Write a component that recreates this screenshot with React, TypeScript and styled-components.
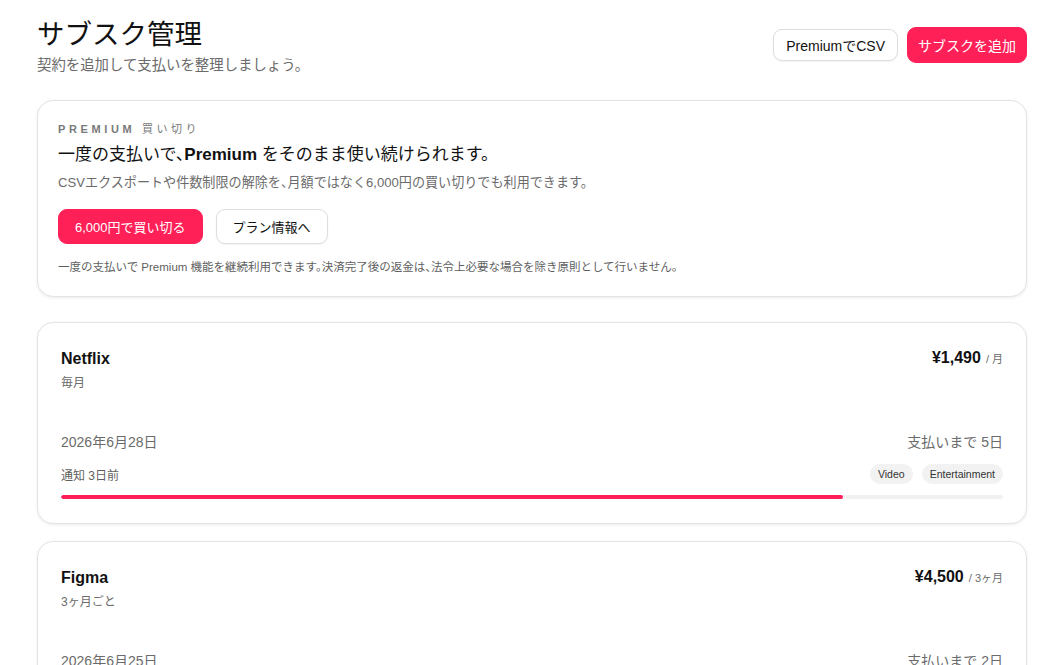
import React from "react";
import styled, { createGlobalStyle } from "styled-components";

const Global = createGlobalStyle`
  html, body { margin: 0; padding: 0; background: #ffffff; overflow: hidden; }
  body {
    font-family: "Liberation Sans", "Noto Sans CJK JP", sans-serif;
    color: #111111;
    -webkit-font-smoothing: antialiased;
    font-feature-settings: "halt";
  }
  * { box-sizing: border-box; }
`;

const RED = "#ff2058";

const Page = styled.main`
  max-width: 990px;
  margin: 0 auto;
  padding: 15px 0 40px;
  display: flex;
  flex-direction: column;
`;

const Header = styled.header`
  display: flex;
  justify-content: space-between;
  align-items: center;
  margin-bottom: 25px;
`;

const TitleBlock = styled.div`
  display: flex;
  flex-direction: column;
`;

const Title = styled.h1`
  margin: 0;
  font-size: 27.5px;
  font-weight: 400;
  line-height: 40px;
  color: #111;
`;

const Subtitle = styled.p`
  margin: 0;
  font-size: 14.4px;
  line-height: 20px;
  color: #6b6b6b;
`;

const Actions = styled.div`
  display: flex;
  align-items: center;
  gap: 9px;
`;

const Button = styled.button<{ $primary?: boolean; $h?: number; $fs?: number; $px?: number }>`
  height: ${(p) => p.$h ?? 35}px;
  padding: 0 ${(p) => p.$px ?? 16}px;
  border-radius: 9px;
  font-family: inherit;
  font-feature-settings: inherit;
  font-size: ${(p) => p.$fs ?? 13}px;
  cursor: pointer;
  white-space: nowrap;
  border: 1px solid ${(p) => (p.$primary ? RED : "#dedede")};
  background: ${(p) => (p.$primary ? RED : "#ffffff")};
  color: ${(p) => (p.$primary ? "#ffffff" : "#111111")};
  box-shadow: ${(p) => (p.$primary ? "none" : "0 1px 2px rgba(0,0,0,0.05)")};
`;

const Card = styled.section<{ $pad?: string }>`
  border: 1px solid #e4e4e4;
  border-radius: 16px;
  background: #fff;
  box-shadow: 0 1px 3px rgba(0, 0, 0, 0.08);
  padding: ${(p) => p.$pad ?? "20px"};
`;

const PremiumCard = styled(Card)`
  margin-bottom: 25px;
  display: flex;
  flex-direction: column;
`;

const Eyebrow = styled.div`
  font-size: 11px;
  line-height: 16px;
  font-weight: 700;
  letter-spacing: 0.33em;
  color: #7a7a7a;
  span { font-weight: 400; letter-spacing: 0.32em; font-size: 11px; margin-left: 0; }
`;

const PremiumHeading = styled.h2`
  margin: 6px 0 0;
  font-size: 17px;
  font-weight: 400;
  line-height: 24px;
  color: #111;
  b { font-weight: 700; }
`;

const PremiumDesc = styled.p`
  margin: 6px 0 0;
  font-size: 13.1px;
  line-height: 20px;
  color: #6b6b6b;
`;

const ButtonRow = styled.div`
  display: flex;
  gap: 13px;
  margin-top: 16px;
`;

const FinePrint = styled.p`
  margin: 14px 0 0;
  font-size: 11.5px;
  line-height: 18px;
  color: #5f5f5f;
`;

const List = styled.div`
  display: flex;
  flex-direction: column;
  gap: 17px;
`;

const SubCard = styled(Card)`
  display: flex;
  flex-direction: column;
`;

const Row = styled.div<{ $align?: string }>`
  display: flex;
  justify-content: space-between;
  align-items: ${(p) => p.$align ?? "center"};
`;

const Name = styled.div`
  font-size: 16px;
  font-weight: 700;
  line-height: 22px;
`;

const Price = styled.div`
  display: flex;
  align-items: baseline;
  gap: 5px;
  font-size: 16px;
  font-weight: 700;
  line-height: 22px;
`;

const Per = styled.span`
  font-size: 11px;
  font-weight: 400;
  color: #6b6b6b;
`;

const Cycle = styled.div`
  margin-top: 4px;
  font-size: 12px;
  line-height: 18px;
  color: #6b6b6b;
`;

const DateRow = styled(Row)`
  margin-top: 40px;
  font-size: 14px;
  line-height: 20px;
  color: #6b6b6b;
`;

const MetaRow = styled(Row)`
  margin-top: 12px;
`;

const Notice = styled.span`
  font-size: 12px;
  color: #5f5f5f;
`;

const Tags = styled.div`
  display: flex;
  gap: 9px;
`;

const Tag = styled.span`
  height: 20px;
  padding: 0 8px;
  display: inline-flex;
  align-items: center;
  border-radius: 999px;
  background: #f2f2f2;
  font-size: 10.5px;
  color: #333;
`;

const Track = styled.div`
  margin-top: 11px;
  height: 4px;
  border-radius: 2px;
  background: #f1f1f1;
  overflow: hidden;
`;

const Fill = styled.div`
  height: 100%;
  background: ${RED};
  border-radius: 2px;
`;

type Sub = {
  name: string;
  cycle: string;
  price: string;
  per: string;
  date: string;
  left: string;
  notice: string;
  tags: string[];
  progress: number;
};

const subs: Sub[] = [
  {
    name: "Netflix",
    cycle: "毎月",
    price: "¥1,490",
    per: "/ 月",
    date: "2026年6月28日",
    left: "支払いまで 5日",
    notice: "通知 3日前",
    tags: ["Video", "Entertainment"],
    progress: 83,
  },
  {
    name: "Figma",
    cycle: "3ヶ月ごと",
    price: "¥4,500",
    per: "/ 3ヶ月",
    date: "2026年6月25日",
    left: "支払いまで 2日",
    notice: "通知 3日前",
    tags: ["Design"],
    progress: 98,
  },
];

export default function App() {
  return (
    <>
      <Global />
      <Page>
        <Header>
          <TitleBlock>
            <Title>サブスク管理</Title>
            <Subtitle>契約を追加して支払いを整理しましょう。</Subtitle>
          </TitleBlock>
          <Actions>
            <Button $h={32} $fs={14} $px={12}>PremiumでCSV</Button>
            <Button $primary $h={36} $fs={14} $px={10}>サブスクを追加</Button>
          </Actions>
        </Header>

        <PremiumCard>
          <Eyebrow>
            PREMIUM <span>買い切り</span>
          </Eyebrow>
          <PremiumHeading>
            一度の支払いで、<b>Premium</b> をそのまま使い続けられます。
          </PremiumHeading>
          <PremiumDesc>
            CSVエクスポートや件数制限の解除を、月額ではなく6,000円の買い切りでも利用できます。
          </PremiumDesc>
          <ButtonRow>
            <Button $primary>6,000円で買い切る</Button>
            <Button>プラン情報へ</Button>
          </ButtonRow>
          <FinePrint>
            一度の支払いで Premium 機能を継続利用できます。決済完了後の返金は、法令上必要な場合を除き原則として行いません。
          </FinePrint>
        </PremiumCard>

        <List>
          {subs.map((s) => (
            <SubCard key={s.name} $pad="24px 23px 24px">
              <Row>
                <Name>{s.name}</Name>
                <Price>
                  {s.price}
                  <Per>{s.per}</Per>
                </Price>
              </Row>
              <Cycle>{s.cycle}</Cycle>
              <DateRow>
                <span>{s.date}</span>
                <span>{s.left}</span>
              </DateRow>
              <MetaRow>
                <Notice>{s.notice}</Notice>
                <Tags>
                  {s.tags.map((t) => (
                    <Tag key={t}>{t}</Tag>
                  ))}
                </Tags>
              </MetaRow>
              <Track>
                <Fill style={{ width: `${s.progress}%` }} />
              </Track>
            </SubCard>
          ))}
        </List>
      </Page>
    </>
  );
}
